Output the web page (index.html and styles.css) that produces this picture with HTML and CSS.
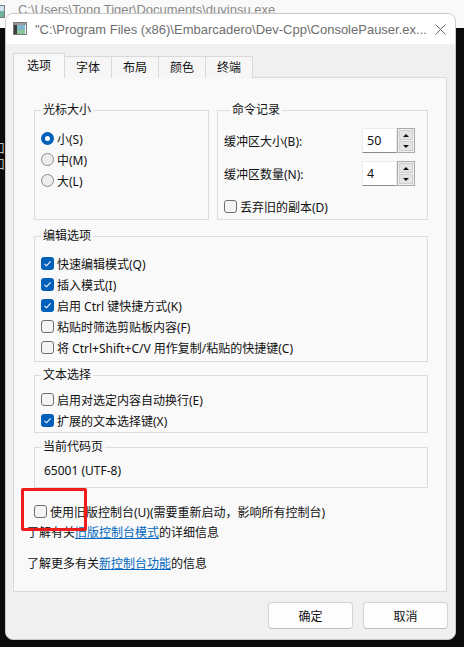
FILE: index.html
```html
<!DOCTYPE html>
<html lang="zh-CN">
<head>
<meta charset="utf-8">
<title>ConsolePauser 属性</title>
<link rel="stylesheet" href="styles.css">
</head>
<body>
<div class="desktop">
  <div class="bgwin">
    <div class="bgtitle">
      <svg class="bgicon" width="14" height="13" viewBox="0 0 14 13"><rect x="0.5" y="0.5" width="13" height="12" fill="#cfe3ef" stroke="#7c7c7c"/><rect x="1" y="1" width="4" height="11" fill="#3a3a3a"/><rect x="5" y="6" width="8" height="6" fill="#6fb09a"/></svg>
      <span class="bgtext">C:\Users\Tong Tiger\Documents\duyinsu.exe</span>
    </div>
    <div class="console">
      <div class="cline">口</div>
      <div class="cline">口</div>
    </div>
  </div>

  <div class="dialog">
    <div class="titlebar">
      <svg class="appicon" width="14" height="13" viewBox="0 0 14 13">
        <rect x="0.5" y="0.5" width="13" height="12" fill="#ffffff" stroke="#7a7a7a"/>
        <rect x="1" y="1" width="12" height="2" fill="#9a9a9a"/>
        <rect x="1" y="3" width="3" height="9" fill="#3c3c3c"/>
        <rect x="4" y="3" width="8" height="9" fill="#7fb7cf"/>
        <rect x="4" y="8" width="8" height="4" fill="#8cc79a"/>
        <rect x="12" y="3" width="1" height="9" fill="#f4f4f4"/>
      </svg>
      <span class="title">"C:\Program Files (x86)\Embarcadero\Dev-Cpp\ConsolePauser.ex...</span>
      <svg class="close" width="11" height="11" viewBox="0 0 11 11"><path d="M0.5 0.5 L10.5 10.5 M10.5 0.5 L0.5 10.5" stroke="#6a6a6a" stroke-width="1" fill="none"/></svg>
    </div>

    <div class="body">
      <div class="tabs">
        <div class="tab active">选项</div>
        <div class="tab">字体</div>
        <div class="tab">布局</div>
        <div class="tab">颜色</div>
        <div class="tab">终端</div>
      </div>

      <div class="panel">
        <div class="toprow">
          <fieldset class="group g-cursor">
            <legend>光标大小</legend>
            <div class="opts">
              <div class="opt"><span class="radio on"></span><span>小(S)</span></div>
              <div class="opt"><span class="radio"></span><span>中(M)</span></div>
              <div class="opt"><span class="radio"></span><span>大(L)</span></div>
            </div>
          </fieldset>
          <fieldset class="group g-history">
            <legend>命令记录</legend>
            <div class="field">
              <span class="flabel">缓冲区大小(B):</span>
              <span class="numbox">50</span>
              <span class="spin"><span class="sbtn"><span class="tri up"></span></span><span class="sbtn"><span class="tri dn"></span></span></span>
            </div>
            <div class="field">
              <span class="flabel">缓冲区数量(N):</span>
              <span class="numbox">4</span>
              <span class="spin"><span class="sbtn"><span class="tri up"></span></span><span class="sbtn"><span class="tri dn"></span></span></span>
            </div>
            <div class="opt discard"><span class="check"></span><span>丢弃旧的副本(D)</span></div>
          </fieldset>
        </div>

        <fieldset class="group g-edit">
          <legend>编辑选项</legend>
          <div class="opts">
            <div class="opt"><span class="check on"><svg width="11" height="11" viewBox="0 0 11 11"><path d="M2.5 5.8 L4.5 7.8 L8.6 3.4" stroke="#fff" stroke-width="1.1" fill="none"/></svg></span><span>快速编辑模式(Q)</span></div>
            <div class="opt"><span class="check on"><svg width="11" height="11" viewBox="0 0 11 11"><path d="M2.5 5.8 L4.5 7.8 L8.6 3.4" stroke="#fff" stroke-width="1.1" fill="none"/></svg></span><span>插入模式(I)</span></div>
            <div class="opt"><span class="check on"><svg width="11" height="11" viewBox="0 0 11 11"><path d="M2.5 5.8 L4.5 7.8 L8.6 3.4" stroke="#fff" stroke-width="1.1" fill="none"/></svg></span><span>启用 Ctrl 键快捷方式(K)</span></div>
            <div class="opt"><span class="check"></span><span>粘贴时筛选剪贴板内容(F)</span></div>
            <div class="opt"><span class="check"></span><span>将 Ctrl+Shift+C/V 用作复制/粘贴的快捷键(C)</span></div>
          </div>
        </fieldset>

        <fieldset class="group g-select">
          <legend>文本选择</legend>
          <div class="opts">
            <div class="opt"><span class="check"></span><span>启用对选定内容自动换行(E)</span></div>
            <div class="opt"><span class="check on"><svg width="11" height="11" viewBox="0 0 11 11"><path d="M2.5 5.8 L4.5 7.8 L8.6 3.4" stroke="#fff" stroke-width="1.1" fill="none"/></svg></span><span>扩展的文本选择键(X)</span></div>
          </div>
        </fieldset>

        <fieldset class="group g-code">
          <legend>当前代码页</legend>
          <div class="codepage">65001 (UTF-8)</div>
        </fieldset>

        <div class="opt legacy"><span class="check"></span><span>使用旧版控制台(U)(需要重新启动，影响所有控制台)</span><span class="highlight"></span></div>
        <div class="info">了解有关<a class="link">旧版控制台模式</a>的详细信息</div>
        <div class="info info2">了解更多有关<a class="link">新控制台功能</a>的信息</div>
      </div>

      <div class="buttons">
        <button class="btn">确定</button>
        <button class="btn">取消</button>
      </div>
    </div>
  </div>
</div>
</body>
</html>
```

FILE: styles.css
```css
* { box-sizing: border-box; }
html, body { margin: 0; padding: 0; }
body {
  width: 464px;
  height: 647px;
  overflow: hidden;
  background: #0c0c0c;
  font-family: "Noto Sans", "Noto Sans CJK SC", sans-serif;
  font-size: 12px;
  color: #111;
}
.desktop { position: relative; width: 464px; height: 647px; }

/* background console window */
.bgwin { width: 464px; }
.bgtitle {
  height: 28px;
  background: #f9f9f9;
  display: flex;
  align-items: flex-start;
}
.bgicon { margin-left: -9px; margin-top: 5px; flex: none; }
.bgtext {
  margin-left: 13px;
  font-family: "Liberation Sans", sans-serif;
  font-size: 13px;
  line-height: 15px;
  padding-top: 2px;
  color: #8a8a8a;
  white-space: nowrap;
}
.console { padding-top: 112px; color: #bdbdbd; font-size: 12px; line-height: 16px; font-family: "Noto Sans CJK SC", sans-serif; }
.cline { text-indent: -7px; }

/* dialog window */
.dialog {
  position: absolute;
  left: 5px;
  top: 13px;
  width: 451px;
  height: 627px;
  border: 1px solid #c9c9c9;
  border-radius: 8px;
  background: #f0f0f0;
  overflow: hidden;
  display: flex;
  flex-direction: column;
}
.titlebar {
  height: 30px;
  flex: none;
  background: #ffffff;
  display: flex;
  align-items: center;
  padding: 0 9px 0 7px;
}
.appicon { flex: none; margin-top: -1px; }
.title {
  margin-left: 8px;
  flex: none;
  font-family: "Liberation Sans", sans-serif;
  font-size: 13px;
  color: #6e6e6e;
  white-space: nowrap;
}
.close { flex: none; margin-left: auto; }

.body {
  flex: 1;
  padding: 9px 8px 0 7px;
  display: flex;
  flex-direction: column;
}
.tabs {
  display: flex;
  align-items: flex-end;
  height: 25px;
  margin-bottom: -1px;
  position: relative;
  z-index: 1;
}
.tab {
  height: 22px;
  padding: 0 11px;
  border: 1px solid #d9d9d9;
  border-left: none;
  border-bottom: none;
  background: #f6f6f6;
  line-height: 21px;
}
.tab.active {
  height: 25px;
  padding: 0 13px;
  border-left: 1px solid #d9d9d9;
  background: #f9f9f9;
  line-height: 24px;
}

.panel {
  height: 515px;
  flex: none;
  border: 1px solid #d9d9d9;
  background: #f9f9f9;
  padding: 24px 18px 0 20px;
  display: flex;
  flex-direction: column;
}

.group {
  margin: 0;
  padding: 0;
  border: 1px solid #dcdcdc;
  min-width: 0;
}
.group legend {
  margin-left: 6px;
  padding: 0 2px;
  line-height: 16px;
  height: 16px;
  color: #111;
}
.toprow { display: flex; gap: 8px; height: 118px; }
.g-cursor { width: 175px; flex: none; }
.g-history { flex: 1; padding: 0 12px 0 6px; }

.opts { display: flex; flex-direction: column; padding-left: 6px; }
.opt { display: flex; align-items: center; height: 21px; gap: 3px; white-space: nowrap; }
.g-cursor .opts { padding-top: 10px; }

.radio {
  width: 13px; height: 13px; flex: none;
  border-radius: 50%;
  border: 1px solid #8a8a8a;
  background: #ededed;
  position: relative;
}
.radio.on { border: none; background: #005fb8; }
.radio.on::after {
  content: "";
  position: absolute;
  left: 4px; top: 4px;
  width: 5px; height: 5px;
  border-radius: 50%;
  background: #fff;
}
.check {
  width: 13px; height: 13px; flex: none;
  border-radius: 3px;
  border: 1px solid #6f6f6f;
  background: #f4f4f4;
  display: flex;
  align-items: center;
  justify-content: center;
}
.check.on { border: none; background: #005fb8; }
.check svg { display: block; }

.field { display: flex; align-items: center; height: 25px; margin-top: 10px; }
.field + .field { margin-top: 8px; }
.flabel { flex: 1; }
.numbox {
  width: 35px; height: 25px;
  background: #fff;
  border: 1px solid #ececec;
  border-bottom-color: #8c8c8c;
  padding-left: 4px;
  line-height: 23px;
  font-size: 12.5px;
}
.spin {
  width: 18px; height: 25px;
  border: 1px solid #a9a9a9;
  background: #f0f0f0;
  padding: 1px;
  display: flex;
  flex-direction: column;
  gap: 1px;
}
.sbtn {
  flex: 1;
  background: #e4e4e4;
  border: 1px solid #cfcfcf;
  display: flex;
  align-items: center;
  justify-content: center;
}
.tri { width: 0; height: 0; border-left: 3px solid transparent; border-right: 3px solid transparent; }
.tri.up { border-bottom: 3px solid #111; }
.tri.dn { border-top: 3px solid #111; }
.discard { margin-top: 10px; }

.g-edit { margin-top: 8px; }
.g-edit .opts { padding-top: 9px; padding-bottom: 3px; }
.g-select { margin-top: 5px; }
.g-select .opts { padding-top: 6px; padding-bottom: 1px; }
.g-code { margin-top: 6px; }
.codepage { padding: 8px 0 8px 9px; line-height: 16px; height: 32px; }

.legacy { margin-top: 13px; position: relative; }
.highlight {
  position: absolute;
  left: -13px;
  top: -13px;
  width: 66px;
  height: 43px;
  border: 3px solid #f01b1b;
  border-radius: 2px;
}
.info { margin-left: -7px; line-height: 21px; height: 21px; white-space: nowrap; }
.info2 { margin-top: 10px; }
.link { color: #0067c0; text-decoration: underline; }

.buttons {
  display: flex;
  justify-content: flex-end;
  gap: 10px;
  margin-top: 10px;
  margin-right: -1px;
}
.btn {
  width: 85px; height: 27px;
  background: #fdfdfd;
  border: 1px solid #d3d3d3;
  border-bottom-color: #bdbdbd;
  border-radius: 4px;
  font-family: "Noto Sans CJK SC", sans-serif;
  font-size: 12px;
  color: #111;
  padding: 0;
}
```
